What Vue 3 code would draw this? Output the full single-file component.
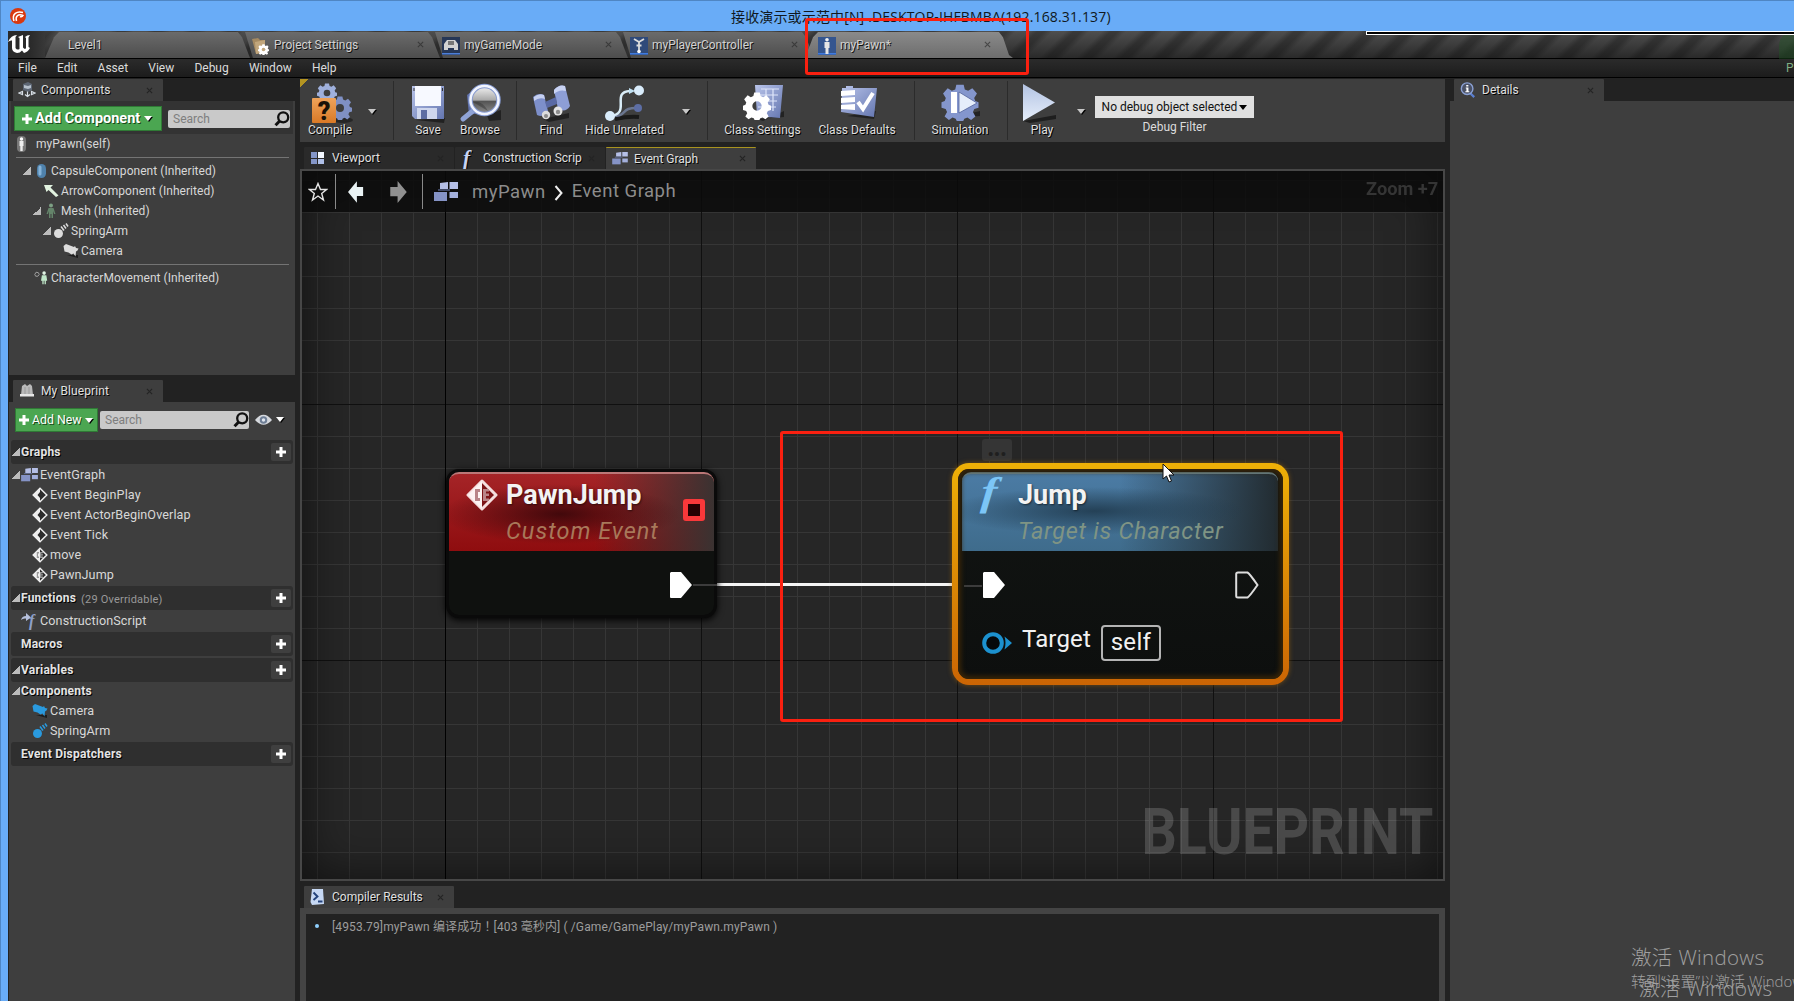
<script setup>
const docTabs = [
  { label: 'Level1', w: 205, cls: 'first', icon: '' },
  { label: 'Project Settings', w: 195, cls: '', icon: 'folder' },
  { label: 'myGameMode', w: 193, cls: '', icon: 'pad' },
  { label: 'myPlayerController', w: 191, cls: '', icon: 'ctrl' },
  { label: 'myPawn*', w: 208, cls: 'active', icon: 'pawn' },
]
const menus = ['File', 'Edit', 'Asset', 'View', 'Debug', 'Window', 'Help']
const tools = [
  { t: 'btn', label: 'Compile', icon: 'compile', w: 60, ml: 0 },
  { t: 'arrow', w: 24, ml: 0 },
  { t: 'sep', w: 10 },
  { t: 'btn', label: 'Save', icon: 'save', w: 44, ml: 12 },
  { t: 'btn', label: 'Browse', icon: 'browse', w: 60, ml: 0 },
  { t: 'sep', w: 7 },
  { t: 'btn', label: 'Find', icon: 'find', w: 44, ml: 12 },
  { t: 'btn', label: 'Hide Unrelated', icon: 'hide', w: 103, ml: 0 },
  { t: 'arrow', w: 20, ml: 0 },
  { t: 'sep', w: 12 },
  { t: 'btn', label: 'Class Settings', icon: 'settings', w: 93, ml: 8 },
  { t: 'btn', label: 'Class Defaults', icon: 'defaults', w: 96, ml: 0 },
  { t: 'sep', w: 10 },
  { t: 'btn', label: 'Simulation', icon: 'sim', w: 74, ml: 8 },
  { t: 'sep', w: 11 },
  { t: 'btn', label: 'Play', icon: 'play', w: 44, ml: 12 },
  { t: 'arrow', w: 29, ml: 2 },
]
const tree = [
  { label: 'CapsuleComponent (Inherited)', d: 0, open: true, icon: 'capsule' },
  { label: 'ArrowComponent (Inherited)', d: 1, open: false, icon: 'arrowc' },
  { label: 'Mesh (Inherited)', d: 1, open: true, icon: 'mesh' },
  { label: 'SpringArm', d: 2, open: true, icon: 'spring' },
  { label: 'Camera', d: 3, open: false, icon: 'camera' },
]
const events = [
  { label: 'Event BeginPlay', icon: 'event' },
  { label: 'Event ActorBeginOverlap', icon: 'event' },
  { label: 'Event Tick', icon: 'event' },
  { label: 'move', icon: 'custom' },
  { label: 'PawnJump', icon: 'custom' },
]
</script>

<template>
  <svg class="defs" width="0" height="0">
    <defs>
      <linearGradient id="g-blue" x1="0" y1="0" x2="1" y2="1"><stop offset="0" stop-color="#b9c4ea" /><stop offset="1" stop-color="#6476b0" /></linearGradient>
      <linearGradient id="g-play" x1="0" y1="0" x2="0" y2="1"><stop offset="0" stop-color="#b3c3e2" /><stop offset="1" stop-color="#e6eefb" /></linearGradient>
      <linearGradient id="g-lens" x1="0" y1="0" x2="0" y2="1"><stop offset="0" stop-color="#f4f4f4" /><stop offset=".5" stop-color="#a9a9a9" /><stop offset=".55" stop-color="#555" /><stop offset="1" stop-color="#8d8d8d" /></linearGradient>
      <linearGradient id="g-orange" x1="0" y1="0" x2="0" y2="1"><stop offset="0" stop-color="#efa35a" /><stop offset="1" stop-color="#d97926" /></linearGradient>
    </defs>
    <symbol id="gear" viewBox="-12 -12 24 24">
      <path fill-rule="evenodd" d="M-2.4-11.5h4.8l.7 3 2.200.9L8-9.200 11-5.800 9.200-3l.7 2 2.100.8v3.600l-2.700.8-.9 2L10 9 7.200 11.400 4.800 9.800l-2 .8-.7 1.400h-4.200l-.7-1.400-2-.8L-7.200 11.400-10 9l1.600-2.800-.9-2L-12 3.400V-.2l2.100-.8.7-2L-11-5.800-8-9.200l2.700 1.600 2.200-.9zM0-4a4 4 0 1 0 0 8 4 4 0 1 0 0-8z" />
    </symbol>
    <symbol id="i-compile" viewBox="0 0 48 42">
      <ellipse cx="37" cy="37" rx="10" ry="3" fill="#181818" opacity=".6" />
      <use href="#gear" x="11" y="0" width="20" height="20" fill="#9fb0dc" />
      <use href="#gear" x="22" y="13" width="24" height="24" fill="#7f90c4" />
      <rect x="6" y="15" width="24" height="25" rx="1" fill="url(#g-orange)" />
      <text x="18" y="37" text-anchor="middle" font-family="Roboto, sans-serif" font-weight="900" font-size="25" fill="#1a1208">?</text>
    </symbol>
    <symbol id="i-save" viewBox="0 0 48 42">
      <path d="M12 37l28 3 1-5z" fill="#151515" opacity=".7" />
      <path d="M8 3h32v33H11l-3-3z" fill="url(#g-blue)" />
      <path d="M11 3h26v20H11z" fill="#f7f9ff" />
      <path d="M13 25h20v11H13z" fill="#cfd7ee" /><path d="M17 27h6v9h-6z" fill="#5d6da3" />
      <path d="M9.500 5h1v3h-1zM38 5h1v3h-1z" fill="#333" />
    </symbol>
    <symbol id="i-browse" viewBox="0 0 48 42">
      <g transform="translate(3 0)">
        <path d="M28 32l14-5v10l-12 1z" fill="#111" opacity=".6" /><path d="M8 12l9-7 3 25-10 2z" fill="#5f6fa8" />
        <path d="M15 27l-11 9" stroke="#8fa3d6" stroke-width="5" stroke-linecap="round" />
        <circle cx="25.500" cy="17" r="14" fill="url(#g-lens)" stroke="#8599cf" stroke-width="4.500" /><circle cx="25.500" cy="17" r="14" fill="none" stroke="#f2f5ff" stroke-width="2.500" />
        <path d="M14 19q9-2 15 9" fill="#303030" opacity=".45" />
      </g>
    </symbol>
    <symbol id="i-find" viewBox="0 0 48 42">
      <path d="M16 36l26-6v5l-20 4z" fill="#111" opacity=".6" />
      <path d="M6 14q5-5 11-2l4 16q-4 7-11 4z" fill="#7d8fca" /><path d="M7 14q5-4 10-2l1 4q-6-2-11 2z" fill="#c5cff0" />
      <path d="M27 7q5-6 11-4l5 20q-4 7-12 3z" fill="#8d9ed6" /><path d="M27 7q5-6 11-4l1 5q-7-2-12 3z" fill="#c9d3f3" />
      <path d="M18 19l11-5 1 7-10 4z" fill="#5a6aa4" />
      <circle cx="19" cy="32" r="4.200" fill="#dcdcdc" /><circle cx="19" cy="33" r="2" fill="#8a8a8a" /><circle cx="31" cy="28" r="4.500" fill="#e4e4e4" /><circle cx="31" cy="29" r="2.200" fill="#8d8d8d" />
    </symbol>
    <symbol id="i-hide" viewBox="0 0 48 42">
      <path d="M14 36q14-3 24-2" stroke="#1a1a1a" stroke-width="4" fill="none" />
      <path d="M9 33c20 1 8-9 29-8" stroke="#6a7690" stroke-width="2.500" fill="none" /><circle cx="37" cy="25" r="4" fill="#5d6ea5" />
      <path d="M9 33c22-2 0-24 20-25" stroke="#d9edf8" stroke-width="2.500" fill="none" /><path d="M28 5l6 3-6 3z" fill="#bfe0f2" />
      <circle cx="9" cy="33" r="5" fill="#d9ecfb" /><circle cx="38" cy="7.500" r="5" fill="#d9ecfb" />
    </symbol>
    <symbol id="i-settings" viewBox="0 0 48 42">
      <g transform="translate(2 0)">
        <path d="M16 36l27-2v-6L22 38z" fill="#111" opacity=".6" /><path d="M14 2h28l-3 33-23-2z" fill="url(#g-blue)" />
        <path d="M20 6h18M19 12h18M18 18h18M17 24h18M25 6v22M32 6v22" stroke="#dfe6fa" stroke-width="1.200" fill="none" />
        <use href="#gear" x="2" y="9" width="28" height="28" fill="#fff" />
      </g>
    </symbol>
    <symbol id="i-defaults" viewBox="0 0 48 42">
      <path d="M14 33l27 3 2-8z" fill="#111" opacity=".6" /><path d="M13 3h7v4h-7zM9 5h35l-3 29-33-5z" fill="url(#g-blue)" />
      <path d="M8 8l14-1v5l-14 1zM8 15l14-1v5l-14 1zM8 22l14-1v6l-14-1z" fill="#fff" />
      <path d="M25 19l5 7 10-16" stroke="#fff" stroke-width="4" fill="none" />
    </symbol>
    <symbol id="i-sim" viewBox="0 0 48 42">
      <path d="M14 35l30-2v-5z" fill="#111" opacity=".6" /><use href="#gear" x="5" y="1" width="38" height="37" fill="#8496cd" />
      <circle cx="24" cy="19" r="9" fill="#8496cd" /><path d="M15 9h6v21h-6z" fill="#fff" /><path d="M23 9l18 11-18 10z" fill="#e6eefb" stroke="#53639b" stroke-width=".8" />
    </symbol>
    <symbol id="i-play" viewBox="0 0 48 42">
      <path d="M5 38l33-6v4L12 40z" fill="#111" opacity=".7" /><path d="M5 1l32 18.500L5 38z" fill="url(#g-play)" />
    </symbol>
    <symbol id="i-folder" viewBox="0 0 18 18"><path d="M0 2l6-1 2 2 5 0v12l-9 2z" fill="#a58a62" /><path d="M3 5l10-2v12l-9 2z" fill="#c1a67c" /><use href="#gear" x="6" y="7" width="11" height="11" fill="#fff" /></symbol>
    <symbol id="i-pad" viewBox="0 0 18 18"><path d="M0 0h18v18H0z" fill="#263757" /><path d="M0 16h18v1.500H0z" fill="#4d7fd8" /><path d="M5 3h8l3 4v6h-4v-2H6v2H2V7z" fill="#d2d2d2" /><path d="M6 4h6v4H6z" fill="#777" /></symbol>
    <symbol id="i-ctrl" viewBox="0 0 18 18"><path d="M0 0h18v18H0z" fill="#2f4a7a" /><path d="M0 16h18v1.500H0z" fill="#3f7be0" /><path d="M4 2l5 3 5-3M9 4v5M6.500 8.500h5M9 9v4" stroke="#dcdcdc" stroke-width="1.800" fill="none" /><circle cx="9" cy="14.500" r="1.800" fill="#fff" /></symbol>
    <symbol id="i-pawn" viewBox="0 0 18 18"><path d="M0 0h18v18H0z" fill="#34558f" /><path d="M0 16h18v1.500H0z" fill="#3f7be0" /><circle cx="9" cy="2.800" r="1.800" fill="#f1f1f1" /><path d="M6.500 5h5v6l-1 0v6H7.500v-6l-1 0z" fill="#e6e6e6" /></symbol>
    <symbol id="i-self" viewBox="0 0 10 16"><rect width="9" height="16" rx="4" fill="#787878" /><circle cx="4.500" cy="3" r="1.700" fill="#fff" /><path d="M2.500 5h4v5l-.8 0v5H3.300v-5l-.8 0z" fill="#eee" /></symbol>
    <symbol id="i-comp" viewBox="0 0 18 16"><path d="M5 2l5-2 4 2v6l-4 2-5-2z" fill="#5d6674" /><path d="M6 3l4 1 3-1v3l-3 1-4-1z" fill="#b6c0cc" /><path d="M1 11l3.500-1.500v3zM17 11l-3.500-1.500v3zM9.500 14V9.500M7 12.500l2.500 2 2.500-2" stroke="#d8dfe6" stroke-width="1.200" fill="none" /></symbol>
    <symbol id="i-book" viewBox="0 0 16 16"><path d="M3 3l3-2 2 2 3-2 2 2 1 9H2z" fill="#b9b9b9" /><path d="M1 11h14v2.500H1z" fill="#e6e6e6" /><path d="M6 4v7M10 4v7" stroke="#999" /></symbol>
    <symbol id="i-info" viewBox="0 0 18 18"><path d="M11 12l5 5" stroke="#5b7fd0" stroke-width="2.500" /><circle cx="8" cy="7.500" r="6.500" fill="#4b5266" stroke="#8aa0d4" stroke-width="1.600" /><path d="M7 3.500h2.400v1.700H7zM6.500 6.200h3v4.300h1v1H6v-1h1.200V7.200h-.7z" fill="#fff" /></symbol>
    <symbol id="i-log" viewBox="0 0 14 16"><path d="M2 0h11l1 15-12 1-1.500-3z" fill="#c6d8f4" /><path d="M3.500 3.500l4 4-4 3.500M8 12.500h4.500" stroke="#24437c" stroke-width="1.900" fill="none" /></symbol>
    <symbol id="i-view" viewBox="0 0 16 16"><path d="M1 2l6 0v6H1zM1 9h6v5H1z" fill="#8496c8" /><path d="M8 2h6v6H8z" fill="#f4f8ff" /><path d="M8 9h6v5H8z" fill="#b0c0e8" /></symbol>
    <symbol id="i-graph" viewBox="0 0 24 20"><path d="M6 1l8-1v7H6zM15.500 0H24v7h-8.500z" fill="#b5bfe6" /><path d="M15.500 10H24v6h-8.500z" fill="#a4b0dc" /><path d="M0 10h13v9H0z" fill="#8593c6" /><path d="M4 8h12" stroke="#7080b8" /></symbol>
    <symbol id="i-capsule" viewBox="0 0 16 16"><rect x="4" y="1" width="9" height="14" rx="4.500" fill="#4f82ac" /><rect x="5.500" y="2.500" width="3" height="10" rx="1.500" fill="#86b3d8" /></symbol>
    <symbol id="i-arrowc" viewBox="0 0 16 16"><path d="M1 2h9L7.500 4.500l8 8-2.500 1.500-7.500-7L3.500 9z" fill="#e2f3e0" /></symbol>
    <symbol id="i-mesh" viewBox="0 0 16 16"><circle cx="8" cy="2.500" r="2" fill="#7da084" /><path d="M5.500 5h5l2 6h-1.500L10 8v7H8.500v-4h-1v4H6V8l-1 3H3.500z" fill="#64846a" /></symbol>
    <symbol id="i-man" viewBox="0 0 18 16"><path d="M2 4l1.500-2.500L6 2l1 2-1.500 2L3 6z" stroke="#aaa" stroke-width="1" fill="none" /><circle cx="12.500" cy="2.500" r="2" fill="#e0f3e4" /><path d="M10 5h5l1 6h-1.500v4H13v-4h-1v4h-1.500v-4H9z" fill="#bfe6c8" /></symbol>
    <symbol id="i-spring" viewBox="0 0 16 16"><circle cx="5.500" cy="10.500" r="4.500" /><path d="M8 3.500l3 4M10.500 2l2.500 3.500M13 .5l2 3" stroke="currentColor" stroke-width="1.500" /></symbol>
    <symbol id="i-camera" viewBox="0 0 16 16"><path d="M4 12l11 3v-3z" fill="#1c1c1c" /><path d="M.5 3L3 1l8 3 1-1 1 2 2.500.5-1 2-1.500 1-.5 5-2-3-2 1-3-2-4-1z" /></symbol>
    <symbol id="i-event" viewBox="0 0 16 16"><path d="M8 1.200L14.800 8 8 14.800 1.200 8z" fill="#2c2c2c" stroke="#eee" stroke-width="1.500" /><path d="M8 1v4L5.500 8 8 11v4L1 8z" fill="#eee" /></symbol>
    <symbol id="i-custom" viewBox="0 0 16 16"><path d="M8 1.200L14.800 8 8 14.800 1.200 8z" fill="#2c2c2c" stroke="#eee" stroke-width="1.500" /><path d="M8 1v14L1 8z" fill="#eee" /><path d="M7 5H4.800v6H7V9.500H6v-3h1zM8 5h3v1.300H9.300v1H11v1.300H9.300v1H11V11H8z" fill="#999" /></symbol>
    <symbol id="i-search" viewBox="0 0 16 16"><circle cx="9.200" cy="6.300" r="5" fill="none" stroke="#111" stroke-width="2.300" /><path d="M5.700 10L1.500 14.300" stroke="#111" stroke-width="3" /></symbol>
    <symbol id="i-plus" viewBox="0 0 12 12"><path d="M4.500 1h3v3.500H11v3H7.500V11h-3V7.500H1v-3h3.500z" fill="#fff" /></symbol>
    <symbol id="i-x" viewBox="0 0 8 8"><path d="M1 1l6 6M7 1L1 7" stroke="#242424" stroke-width="1.300" /></symbol>
  </svg>

  <div class="window">
    <header class="title">
      <svg class="app-icon" viewBox="0 0 16 16"><circle cx="8" cy="8" r="8" fill="#d9380f" /><path d="M4 13C1.500 6 7 2.500 13 4.500M6.500 13C5 8 8.500 5.500 13 7.500q-1 2-3 1" stroke="#fff" stroke-width="1.500" fill="none" /></svg>
      <span class="title-text">接收演示或示范中[N] .DESKTOP-IHFBMBA(192.168.31.137)</span>
    </header>

    <div class="editor">
      <div class="doc-bar">
        <div class="logo"><svg width="23" height="20" viewBox="0 0 23 20"><path d="M0 8Q3 1 9 1L7.500 3v11q1.500 2.500 4 1V4L10 3l5-2v12.500q2 2.500 3 .5V4l-1-1q2-2 5-2l-1.500 2.500V13l1.500 1q-2 4-6 5l-2-2.500Q12 19 9 19q-5-1-5-5V6.500Q2 6 0 8z" fill="#fff" /></svg></div>
        <div v-for="t in docTabs" :key="t.label" class="doc-tab" :class="t.cls" :style="{ width: t.w + 'px' }">
          <svg v-if="t.icon" class="doc-ic"><use :href="'#i-' + t.icon" /></svg>
          <span>{{ t.label }}</span>
          <svg v-if="t.icon" class="x"><use href="#i-x" /></svg>
        </div>
        <div class="glow"></div>
        <div class="thumb"></div>
      </div>
      <nav class="menu">
        <span v-for="m in menus" :key="m">{{ m }}</span>
        <b class="cut">P</b>
      </nav>

      <div class="main">
        <aside class="left">
          <section class="dock comps">
            <div class="tab"><svg class="tab-ic"><use href="#i-comp" /></svg><span>Components</span><svg class="x"><use href="#i-x" /></svg></div>
            <div class="body">
              <div class="bar">
                <button class="green big"><svg><use href="#i-plus" /></svg><span>Add Component</span><i class="down"></i></button>
                <div class="search"><span>Search</span><svg><use href="#i-search" /></svg></div>
              </div>
              <div class="list">
                <div class="row self"><svg><use href="#i-self" /></svg>myPawn(self)</div>
                <hr />
                <div v-for="n in tree" :key="n.label" class="row" :style="{ paddingLeft: 13 + n.d * 10 + 'px' }">
                  <i class="fold" :class="{ on: n.open }"></i><svg class="ic"><use :href="'#i-' + n.icon" /></svg>{{ n.label }}
                </div>
                <hr class="second" />
                <div class="row char"><i class="fold"></i><svg class="ic"><use href="#i-man" /></svg>CharacterMovement (Inherited)</div>
              </div>
            </div>
          </section>

          <section class="dock bp">
            <div class="tab"><svg class="tab-ic"><use href="#i-book" /></svg><span>My Blueprint</span><svg class="x"><use href="#i-x" /></svg></div>
            <div class="body">
              <div class="bar">
                <button class="green"><svg><use href="#i-plus" /></svg><span>Add New</span><i class="down"></i></button>
                <div class="search"><span>Search</span><svg><use href="#i-search" /></svg></div>
                <svg class="eye" viewBox="0 0 18 12"><path d="M0 6q9-11 18 0-9 10-18 0z" fill="#d5d8dd" /><circle cx="9" cy="6" r="4" fill="#6f7f96" /><circle cx="9" cy="6" r="1.800" fill="#dfe6ef" /></svg>
                <i class="down"></i>
              </div>
              <div class="cat"><i class="fold on"></i><b>Graphs</b><button><svg><use href="#i-plus" /></svg></button></div>
              <div class="row eg"><i class="fold on"></i><svg class="gic"><use href="#i-graph" /></svg>EventGraph</div>
              <div v-for="e in events" :key="e.label" class="row sub"><svg class="ic"><use :href="'#i-' + e.icon" /></svg>{{ e.label }}</div>
              <div class="cat fn"><i class="fold on"></i><b>Functions</b><small>(29 Overridable)</small><button><svg><use href="#i-plus" /></svg></button></div>
              <div class="row cs"><svg width="16" height="16" viewBox="0 0 16 16"><path d="M0 7q1-4 5-4V0l5 4.500L5 8V5.500Q2 5 0 7z" fill="#b6c0dc" /><text x="8" y="13" font-family="Liberation Serif, serif" font-style="italic" font-weight="bold" font-size="16" fill="#8fa0c8">f</text></svg>ConstructionScript</div>
              <div class="cat"><i class="fold"></i><b>Macros</b><button><svg><use href="#i-plus" /></svg></button></div>
              <div class="cat vars"><i class="fold on"></i><b>Variables</b><button><svg><use href="#i-plus" /></svg></button></div>
              <div class="row cm"><i class="fold on"></i><b>Components</b></div>
              <div class="row sub blue"><svg class="ic"><use href="#i-camera" /></svg>Camera</div>
              <div class="row sub blue"><svg class="ic"><use href="#i-spring" /></svg>SpringArm</div>
              <div class="cat ed"><i class="fold"></i><b>Event Dispatchers</b><button><svg><use href="#i-plus" /></svg></button></div>
            </div>
          </section>
        </aside>

        <main class="center">
          <div class="toolbar">
            <template v-for="(t, i) in tools" :key="i">
              <div v-if="t.t === 'btn'" class="tool" :style="{ width: t.w + 'px', marginLeft: t.ml + 'px' }"><svg><use :href="'#i-' + t.icon" /></svg><span>{{ t.label }}</span></div>
              <div v-else-if="t.t === 'arrow'" class="tarrow" :style="{ width: t.w + 'px', marginLeft: t.ml + 'px' }"><i class="down"></i></div>
              <div v-else class="sep" :style="{ width: t.w + 'px' }"></div>
            </template>
            <div class="filter"><div class="select"><span>No debug object selected</span><i class="down"></i></div><span class="flabel">Debug Filter</span></div>
          </div>

          <div class="gtabs">
            <div class="tab off"><svg class="tab-ic"><use href="#i-view" /></svg><span>Viewport</span><svg class="x"><use href="#i-x" /></svg></div>
            <div class="tab off"><span class="fi">f</span><span>Construction Scrip</span><svg class="x"><use href="#i-x" /></svg></div>
            <div class="tab on"><svg class="tab-ic"><use href="#i-graph" /></svg><span>Event Graph</span><svg class="x"><use href="#i-x" /></svg></div>
          </div>

          <div class="graph">
            <div class="crumbs">
              <svg class="star" viewBox="0 0 20 20"><path d="M10 1.500l2.500 6h6l-4.800 4 1.800 6.500-5.500-4-5.500 4 1.800-6.500-4.800-4h6z" fill="none" stroke="#e4e4e4" stroke-width="1.400" /></svg>
              <i class="vline"></i>
              <svg class="nav" viewBox="0 0 18 24"><path d="M0 12L10 0v6.500h7v10h-7V24z" fill="#e9f2f4" /></svg>
              <svg class="nav fwd" viewBox="0 0 18 24"><path d="M18 12L8 0v6.500H0v10h8V24z" fill="#909090" /></svg>
              <i class="vline v2"></i>
              <svg class="gbig"><use href="#i-graph" /></svg>
              <span class="c1">myPawn</span>
              <svg class="chev" viewBox="0 0 10 16"><path d="M1.500 1l6 7-6 7" fill="none" stroke="#eee" stroke-width="2" /></svg>
              <span class="c2">Event Graph</span>
              <span class="zoom">Zoom +7</span>
            </div>

            <span class="mark">BLUEPRINT</span>
            <i class="wire"></i>

            <div class="node pj">
              <div class="nhead">
                <svg class="nic" viewBox="0 0 32 32"><path d="M16 2l14 14-14 14L2 16z" fill="#7c1417" stroke="#f5dede" stroke-width="3" stroke-linejoin="round" /><path d="M16 2v28L2 16z" fill="#fdf3f3" /><path d="M14 10H9v12h5v-3h-2v-6h2zM17 10h6v2.500h-3v2h3v2.500h-3v2.500h3V22h-6z" fill="#b98488" /></svg>
                <div class="nt"><b>PawnJump</b><em>Custom Event</em></div>
                <i class="dele"></i>
              </div>
              <svg class="exec" viewBox="0 0 24 28"><path d="M2 1h10l11 13-11 13H2q-1 0-1-1V2z" fill="#fff" /></svg>
              <i class="tail r"></i>
            </div>

            <div class="bubble">•••</div>
            <div class="node jump">
              <div class="nhead">
                <span class="nf">f</span>
                <div class="nt"><b>Jump</b><em>Target is Character</em></div>
              </div>
              <div class="execs">
                <svg viewBox="0 0 24 28"><path d="M2 1h10l11 13-11 13H2q-1 0-1-1V2z" fill="#fff" /></svg>
                <svg viewBox="0 0 24 28"><path d="M3 1.500h9.500q2 1 10 12.500-8 11.500-10 12.500H3q-1.800 0-1.800-1.500V3q0-1.500 1.800-1.500z" fill="none" stroke="#ddd" stroke-width="2" /></svg>
              </div>
              <div class="target">
                <svg viewBox="0 0 30 24"><circle cx="11" cy="12" r="8.800" fill="#05080a" stroke="#1c91cf" stroke-width="4" /><path d="M22.500 5.500L30 12l-7.500 6.500q2-6.500 0-13z" fill="#1c91cf" /></svg>
                <span>Target</span><div class="selfbox">self</div>
              </div>
              <i class="tail l"></i>
            </div>
            <svg class="cursor" viewBox="0 0 13 20"><path d="M1 1v15l3.500-3 2.500 6 2.500-1-2.500-6H12z" fill="#fff" stroke="#111" stroke-width="1" /></svg>
            <div class="redbox graph-red"></div>
          </div>

          <div class="compiler">
            <div class="tab"><svg class="tab-ic"><use href="#i-log" /></svg><span>Compiler Results</span><svg class="x"><use href="#i-x" /></svg></div>
            <div class="log"><i></i><span>[4953.79]myPawn 编译成功<span class="bang">！</span>[403 毫秒内] ( /Game/GamePlay/myPawn.myPawn )</span></div>
          </div>
        </main>

        <aside class="right">
          <div class="tab"><svg class="tab-ic"><use href="#i-info" /></svg><span>Details</span><svg class="x"><use href="#i-x" /></svg></div>
          <div class="body"></div>
        </aside>
      </div>
    </div>

    <div class="redbox tab-red"></div>
    <div class="wm w1">激活 Windows</div>
    <div class="wm w2">转到“设置”以激活 Windows。</div>
    <div class="wm w3">激活 Windows</div>
  </div>
</template>

<style>
html, body { margin: 0; overflow: hidden; background: #222; }
</style>

<style scoped>
* { box-sizing: border-box; }
.defs { position: absolute; }
.window { position: relative; width: 1794px; height: 1001px; overflow: hidden; background: #69acf7; border-left: 1px solid #4f86c4; border-top: 1px solid #4f86c4; display: flex; flex-direction: column; font: 12px/16px Roboto, "Noto Sans CJK SC", sans-serif; color: #dcdcdc; }
button { border: 0; padding: 0; font: inherit; color: inherit; }
.title { height: 30px; flex: none; display: flex; align-items: center; padding-left: 9px; }
.app-icon { width: 16px; height: 16px; }
.title-text { margin: 1px 0 0 705px; font: 14px/20px "Open Sans", "Noto Sans CJK SC", sans-serif; color: #101820; white-space: nowrap; letter-spacing: .15px; }
.editor { margin-left: 7px; flex: 1; min-height: 0; background: #222; display: flex; flex-direction: column; }

.doc-bar { position: relative; height: 28px; flex: none; display: flex; border-bottom: 1px solid #000; background: linear-gradient(#4c4c4c55, #1c1c1cbb), repeating-linear-gradient(135deg, #303030 0 5px, #505050 11px 20px, #303030 26px); }
.logo { width: 37px; background: linear-gradient(90deg, #2a2a2a 60%, #383838); padding: 3px 0 0 0; }
.doc-tab { position: relative; height: 26px; top: 1px; margin-left: -5px; padding: 0 0 1px 7px; display: flex; align-items: center; background: linear-gradient(#6b6b6b, #4d4d4d); clip-path: polygon(0 0, calc(100% - 12px) 0, calc(100% - 8px) 20%, 100% 100%, 8px 100%); color: #d2d2d2; text-shadow: 1px 1px 0 #111; }
.doc-tab.first { margin-left: 0; padding-left: 23px; clip-path: polygon(0 100%, 9px 20%, 14px 0, calc(100% - 12px) 0, calc(100% - 8px) 20%, 100% 100%); }
.doc-tab.active { margin-left: -9px; padding-left: 13px; background: linear-gradient(#8a8a8a, #6d6d6d); clip-path: polygon(0 100%, 8px 20%, 13px 0, calc(100% - 14px) 0, calc(100% - 10px) 20%, calc(100% - 4px) 88%, 100% 100%); }
.doc-ic { width: 18px; height: 18px; margin: 2px 4px 0 0; flex: none; }
.doc-tab:not(.first) { text-indent: 0; letter-spacing: -.02px; }
.doc-tab .x { margin-right: 16px; opacity: .6; }
.doc-tab.active .x { margin-right: 22px; }
.x { width: 7px; height: 7px; margin-left: auto; margin-right: 10px; flex: none; }
.glow { position: absolute; left: 1771px; top: 0; width: 30px; height: 44px; border-radius: 15px; background: #1d5a2366; }
.thumb { position: absolute; left: 1358px; top: 0; width: 440px; height: 4px; border: 1px solid #fff; background: #000; }
.menu { height: 19px; flex: none; display: flex; align-items: center; background: linear-gradient(#2b2b2b, #1c1c1c); border-bottom: 1px solid #000; padding-left: 10px; position: relative; gap: 20.200px; }
.cut { position: absolute; left: 1778px; top: 1px; color: #7fae84; font-weight: 400; }

.main { flex: 1; min-height: 0; display: flex; padding-top: 1px; }
.left { width: 286px; margin-left: 1px; flex: none; display: flex; flex-direction: column; }
.tab { width: 150px; height: 22px; background: #3e3e3e; display: flex; align-items: center; color: #e0e0e0; text-shadow: 1px 1px 0 #000; border-radius: 1px 1px 0 0; white-space: nowrap; }
.tab-ic { width: 18px; height: 16px; margin: 0 5px 0 5px; flex: none; }
.dock > .tab { margin-left: 4px; letter-spacing: .1px; }
.body { background: #3e3e3e; }
.comps .body { height: 274px; }
.comps .bar { height: 33px; margin: 0 2px; background: #333; padding: 5px 3px 0; display: flex; }
.green { height: 25px; background: #4ba651; border: 1px solid #2f7a35; display: flex; align-items: center; color: #fff; text-shadow: 1px 1px 0 #174a1b; flex: none; }
.green svg { width: 12px; height: 12px; }
.green.big { width: 148px; padding-left: 6px; font-weight: 700; font-size: 14.500px; }
.green.big span { margin: 0 4px 0 2px; }
.down { display: block; width: 0; height: 0; border: 4.500px solid transparent; border-top: 5px solid #fff; border-bottom: 0; filter: drop-shadow(1px 1px 0 #000); }
.search { background: #c9c9c9; border-radius: 2px; height: 18px; display: flex; align-items: center; justify-content: space-between; color: #7e7e7e; padding: 0 0 0 5px; flex: none; }
.search svg { width: 16px; height: 16px; }
.comps .search { width: 122px; margin: 4px 0 0 6px; }
.row { height: 20px; display: flex; align-items: center; white-space: nowrap; letter-spacing: .05px; color: #d8d8d8; }
.bp .row { font-size: 12.600px; letter-spacing: .1px; }
.self { padding: 0 0 0 8px; height: 20px; margin-bottom: 3px; }
.self svg { width: 10px; height: 16px; margin-right: 9px; }
hr { border: 0; height: 1px; background: #747474; margin: 0 6px 3px 7px; }
hr.second { margin: 3px 6px 3px 7px; }
.fold { width: 10px; height: 8px; flex: none; }
.fold.on { background: linear-gradient(135deg, transparent 50%, #bcbcbc 50%) 1px 0 / 8px 8px no-repeat; }
.ic { width: 16px; height: 16px; margin: 0 2px 0 1px; flex: none; fill: #dcdcdc; color: #dcdcdc; }
.char { padding-left: 13px; }

.bp { margin-top: 5px; flex: 1; display: flex; flex-direction: column; }
.bp .body { flex: 1; }
.bp .bar { height: 38px; padding: 6px 0 0 6px; display: flex; }
.bp .green { width: 83px; height: 24px; padding-left: 2px; }
.bp .green span { margin: 0 4px 0 2px; font-size: 12.300px; }
.bp .search { width: 149px; margin: 3px 0 0 2px; }
.eye { width: 17px; height: 12px; margin: 6px 4px 0 6px; }
.bp .bar > .down { margin-top: 9px; }
.cat { height: 24px; margin: 0 2px; background: #2f2f2f; border-radius: 3px; display: flex; align-items: center; }
.cat b, .cm b { color: #e4e4e4; text-shadow: 1px 1px 0 #000; font-weight: 700; font-size: 12px; letter-spacing: .22px; }
.cat small { margin: 3px 0 0 5px; font-size: 11px; color: #999; letter-spacing: .2px; }
.cat button { margin-left: auto; margin-right: 2px; width: 20px; height: 18px; background: #3f3f3f; border-radius: 2px; display: flex; align-items: center; justify-content: center; }
.cat svg { width: 12px; height: 12px; }
.eg { padding-left: 2px; margin-top: 1px; }
.gic { width: 17px; height: 14px; margin-right: 2px; }
.sub { padding-left: 22px; }
.fn { margin-top: 1px; }
.cs { padding-left: 12px; height: 22px; }
.cs svg { margin-right: 3px; overflow: visible; }
.vars { margin-top: 2px; }
.cm { padding-left: 2px; height: 18px; margin-bottom: 1px; }
.blue .ic { fill: #2a9ade; color: #2a9ade; }
.ed { margin-top: 1px; }

.center { width: 1145px; margin-left: 5px; flex: none; display: flex; flex-direction: column; min-width: 0; }
.toolbar { height: 63px; flex: none; display: flex; background: linear-gradient(135deg, #b49421 6px, transparent 6px) #3e3e3e; }
.tool { display: flex; flex-direction: column; align-items: center; padding-top: 4px; }
.tool svg { width: 48px; height: 42px; flex: none; overflow: visible; }
.tool span { margin-top: -3px; white-space: nowrap; color: #dedede; text-shadow: 1px 1px 0 #000; }
.tarrow { display: flex; justify-content: center; padding-top: 30px; }
.tarrow .down { border-top-color: #c8c8c8; border-width: 5px 4px 0; }
.sep { border-right: 1px solid #2b2b2b; height: 59px; margin-top: 2px; flex: none; }
.filter { width: 159px; padding-top: 17px; display: flex; flex-direction: column; align-items: center; }
.select { width: 159px; height: 22px; background: #e0e0e0; color: #111; display: flex; align-items: center; justify-content: center; gap: 2px; white-space: nowrap; }
.select .down { border-top-color: #000; filter: none; }
.flabel { margin-top: 1px; }
.gtabs { height: 27px; padding: 5px 0 0 4px; display: flex; gap: 1px; flex: none; }
.tab.off { background: #2a2a2a; }
.tab.on { border-top: 1px solid #a8931f; }
.tab.on .tab-ic { height: 13px; }
.fi { font: italic bold 21px/18px "Liberation Serif", serif; color: #c8d4f4; width: 28px; padding-left: 8px; flex: none; }

.graph { position: relative; height: 712px; flex: none; border: 2px solid #474747; background:
  linear-gradient(90deg, #000 1px, transparent 1px) 143px 0 / 4000px 100%,
  linear-gradient(90deg, #101010 1px, transparent 1px) 143px 0 / 256px 100%,
  linear-gradient(#101010 1px, transparent 1px) 0 233px / 100% 256px,
  linear-gradient(90deg, #363636 1px, transparent 1px) 15px 0 / 32px 100%,
  linear-gradient(#363636 1px, transparent 1px) 0 9px / 100% 32px, #262626; overflow: hidden; }
.graph::before { content: ""; position: absolute; inset: 0; box-shadow: inset 0 0 50px #0009; }
.crumbs { position: relative; height: 41px; background: #0a0a0acc; display: flex; align-items: center; color: #8c8c8c; font-size: 18.500px; letter-spacing: .5px; }
.star { width: 20px; height: 20px; margin-left: 6px; }
.vline { width: 1px; height: 35px; background: #8a8a8a; margin-left: 7px; }
.nav { width: 16px; height: 22px; margin-left: 12px; }
.fwd { margin-left: 26px; width: 17px; }
.v2 { margin-left: 15px; }
.gbig { width: 24px; height: 20px; margin-left: 11px; }
.c1 { margin-left: 14px; }
.chev { width: 10px; height: 16px; margin: 2px 8px 0 8px; }
.c2 { margin-top: -1px; }
.zoom { position: absolute; right: 5px; top: 8px; font: bold 19px/20px Roboto, sans-serif; letter-spacing: 0; color: #353535; transform: scaleX(.96); transform-origin: right; }
.mark { position: absolute; right: 10px; bottom: 15px; font: bold 65.500px/65px Roboto, sans-serif; color: #ffffff2b; transform: scaleX(.845); transform-origin: right; }
.wire { position: absolute; left: 415px; top: 412px; width: 236px; height: 3px; background: #f4f4f4; }
.node { position: absolute; background: #0f110f; }
.pj { left: 144px; top: 298px; width: 271px; height: 149px; border-radius: 13px; border: 3px solid #0a0a0a; box-shadow: 0 2px 7px #000; }
.nhead { height: 79px; display: flex; position: relative; }
.pj .nhead { border-radius: 10px 10px 0 0; border-top: 2px solid #b77; background: radial-gradient(ellipse 120px 30px at 42% 52%, #2c0508cc, transparent), linear-gradient(90deg, #b3161a00 55%, #3a3231 100%), linear-gradient(#a52427, #8f0d0f); }
.nic { width: 32px; height: 32px; margin: 5px 9px 0 17px; }
.nt { display: flex; flex-direction: column; white-space: nowrap; margin-left: -1px; }
.nt b { font-size: 27px; line-height: 32px; margin-top: 5px; color: #f3f3f3; text-shadow: 1px 1px 2px #0008; }
.nt em { font-size: 23.500px; line-height: 30px; margin-top: 5px; color: #a8785a; letter-spacing: 1px; }
.dele { position: absolute; right: 9px; top: 25px; width: 22px; height: 22px; border: 5px solid #f9383a; border-radius: 3px; background: #260002; }
.exec { position: absolute; left: 220px; top: 99px; width: 24px; height: 28px; }
.tail { position: absolute; height: 2px; background: #3c3c3c; }
.tail.r { left: 244px; top: 112px; width: 24px; }
.tail.l { left: 6px; top: 116px; width: 18px; }
.jump { left: 650px; top: 292px; width: 337px; height: 222px; border-radius: 17px; background: linear-gradient(#121513, #0d0f0e) padding-box, linear-gradient(#eeb007, #cb6504) border-box; border: 6px solid transparent; box-shadow: 0 0 5px #b8730a88; padding: 3px 5px 0 4px; }
.jump::after { content: ""; position: absolute; inset: 0; border-radius: 11px; box-shadow: inset 0 0 5px 3px #3a2608; pointer-events: none; }
.jump .nhead { border-radius: 9px 9px 0 0; border-top: 2px solid #7295a2; background: radial-gradient(ellipse 150px 24px at 42% 48%, #1c3446cc, transparent), linear-gradient(90deg, #4a78a000 50%, #222b30 100%), linear-gradient(#4b7ba4, #3f6c8c); }
.nf { width: 57px; padding-left: 21px; font: italic bold 40px/36px "Liberation Serif", serif; color: #7cc6f7; transform: scaleX(1.2) skewX(-4deg); transform-origin: 30px 20px; }
.jump .nt em { color: #7f9484; letter-spacing: .7px; }
.execs { display: flex; justify-content: space-between; padding: 20px 19px 0 20px; }
.execs svg { width: 24px; height: 28px; }
.target { display: flex; padding-left: 20px; margin-top: 26px; font-size: 24px; line-height: 28px; color: #f2f2f2; align-items: center; height: 36px; }
.target svg { width: 30px; height: 24px; }
.target span { margin: -8px 10px 0 10px; letter-spacing: .15px; }
.selfbox { width: 60px; height: 36px; border: 2px solid #b4b4b4; border-radius: 4px; text-align: center; line-height: 31px; letter-spacing: .3px; }
.bubble { position: absolute; left: 680px; top: 268px; width: 30px; height: 22px; background: #353535; border-radius: 3px; color: #1f1f1f; text-align: center; font-size: 19px; line-height: 31px; }
.cursor { position: absolute; left: 860px; top: 292px; width: 13px; height: 20px; }
.redbox { position: absolute; border: 3px solid #fa2010; border-radius: 3px; }
.graph-red { left: 478px; top: 260px; width: 563px; height: 291px; }
.tab-red { left: 804px; top: 17px; width: 224px; height: 57px; }
.compiler { flex: 1; display: flex; flex-direction: column; margin-top: 5px; }
.compiler .tab { margin-left: 4px; }
.compiler .tab-ic { width: 14px; margin: 0 8px 0 6px; }
.log { flex: 1; border: 6px solid #444; border-bottom: 0; display: flex; padding: 4px 0 0 9px; color: #9d9d9d; white-space: nowrap; letter-spacing: .13px; }
.log i { width: 4px; height: 4px; border-radius: 2px; background: #8fd0ff; margin: 6px 13px 0 0; }
.bang { font-family: "Noto Sans CJK TC", sans-serif; }
.right { flex: 1; min-width: 0; margin-left: 5px; display: flex; flex-direction: column; }
.right .tab { margin-left: 4px; }
.right .body { flex: 1; }
.wm { position: absolute; color: #a0a0a0; white-space: nowrap; font-family: "Open Sans", "Noto Sans CJK SC", sans-serif; font-weight: 300; }
.w1 { left: 1630px; top: 941px; font-size: 20.500px; line-height: 30px; letter-spacing: .35px; }
.w2 { left: 1630px; top: 967px; font-size: 15px; line-height: 26px; }
.w3 { left: 1638px; top: 972px; font-size: 20.500px; line-height: 30px; letter-spacing: .35px; }
</style>
